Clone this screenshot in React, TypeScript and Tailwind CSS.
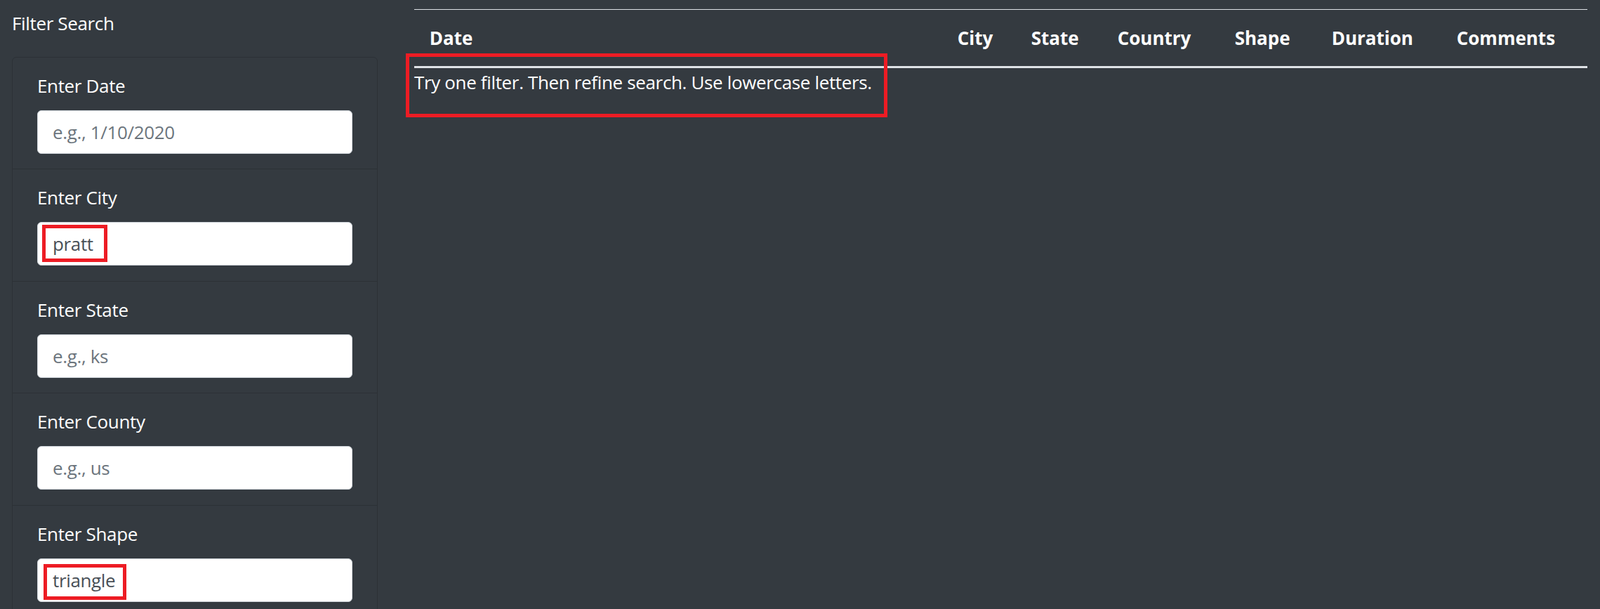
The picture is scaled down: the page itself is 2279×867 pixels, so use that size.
import { useState } from "react";

type Filter = { id: string; label: string; placeholder: string; value: string };

const initialFilters: Filter[] = [
  { id: "datetime", label: "Enter Date", placeholder: "e.g., 1/10/2020", value: "" },
  { id: "city", label: "Enter City", placeholder: "e.g., benton", value: "pratt" },
  { id: "state", label: "Enter State", placeholder: "e.g., ks", value: "" },
  { id: "country", label: "Enter County", placeholder: "e.g., us", value: "" },
  { id: "shape", label: "Enter Shape", placeholder: "e.g., triangle", value: "triangle" },
];

const columns = [
  { name: "Date", width: "w-[752px]" },
  { name: "City", width: "w-[105px]" },
  { name: "State", width: "w-[123px]" },
  { name: "Country", width: "w-[167px]" },
  { name: "Shape", width: "w-[138px]" },
  { name: "Duration", width: "w-[178px]" },
  { name: "Comments", width: "w-[208px]" },
];

export default function App() {
  const [filters, setFilters] = useState<Filter[]>(initialFilters);

  const update = (id: string, value: string) =>
    setFilters((prev) => prev.map((f) => (f.id === id ? { ...f, value } : f)));

  return (
    <div className="relative h-screen overflow-hidden bg-[#343a40] text-white font-['Open_Sans',sans-serif] text-[26px] leading-[1.5] tracking-[-0.35px]">
      <div className="flex">
        {/* sidebar */}
        <aside className="w-[555px] shrink-0 pl-[17px] pr-[17px] pt-[14px]">
          <h5 className="font-normal">Filter Search</h5>
          <ul className="mt-[28px] rounded-[6px] border border-[#2c3136]">
            {filters.map((f, i) => (
              <li
                key={f.id}
                className={`px-[35px] pt-[21px] pb-[21.4px] ${i > 0 ? "border-t border-[#2c3136]" : ""}`}
              >
                <label htmlFor={f.id} className="block mb-[15px]">
                  {f.label}
                </label>
                <input
                  id={f.id}
                  type="text"
                  value={f.value}
                  placeholder={f.placeholder}
                  onChange={(e) => update(f.id, e.target.value)}
                  className="block w-full h-[62px] rounded-[6px] border border-[#ced4da] bg-white pl-[21px] pr-[20px] text-[#495057] placeholder:text-[#6c757d] outline-none"
                />
              </li>
            ))}
          </ul>
        </aside>

        {/* results */}
        <main className="flex-1 pl-[35px] pr-[18px] pt-[13px]">
          <table className="table-fixed border-collapse w-[1671px]">
            <thead>
              <tr>
                {columns.map((c) => (
                  <th
                    key={c.name}
                    className={`${c.width} text-left font-bold tracking-normal border-t border-[#dee2e6] border-b-[3px] border-b-[#dee2e6] pl-[21.7px] pt-[21px] pb-[20px]`}
                  >
                    {c.name}
                  </th>
                ))}
              </tr>
            </thead>
            <tbody></tbody>
          </table>
          <p className="mt-[1px]">Try one filter. Then refine search. Use lowercase letters.</p>
        </main>
      </div>

      {/* red annotation boxes */}
      <div className="pointer-events-none absolute left-[578px] top-[76px] w-[686px] h-[91px] border-[5px] border-[#ed1c24]" />
      <div className="pointer-events-none absolute left-[60px] top-[320px] w-[93px] h-[53px] border-[5px] border-[#ed1c24]" />
      <div className="pointer-events-none absolute left-[62px] top-[803px] w-[118px] h-[51px] border-[5px] border-[#ed1c24]" />
    </div>
  );
}
